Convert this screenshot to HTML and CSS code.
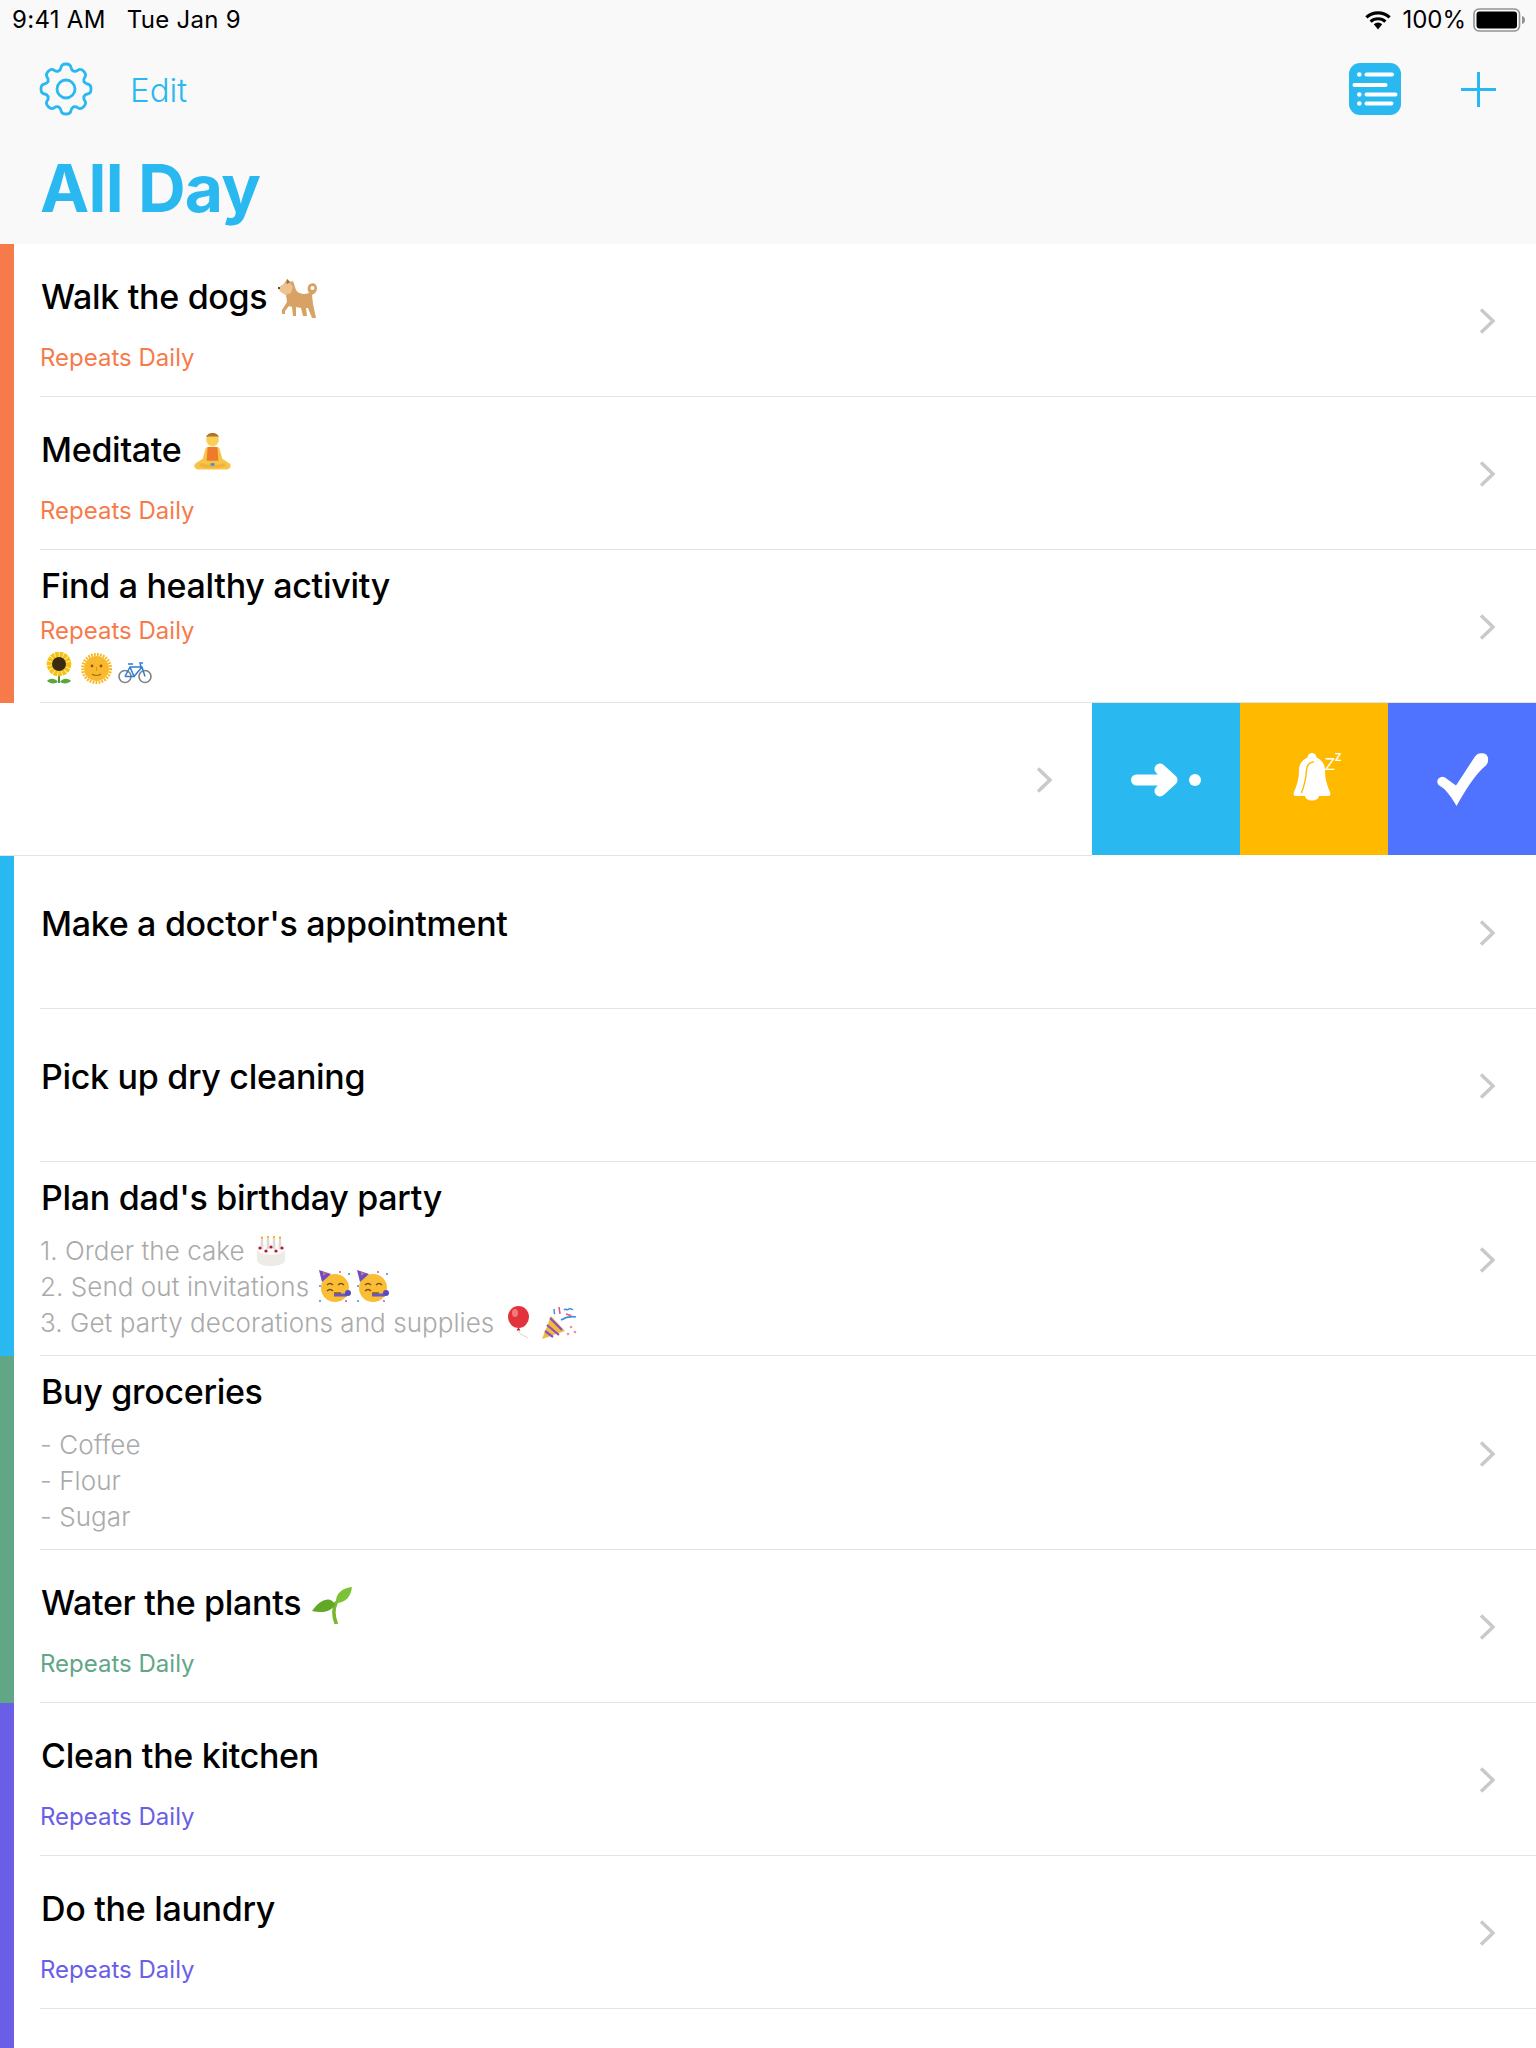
FILE: index.html
```html
<!DOCTYPE html>
<html lang="en">
<head>
<meta charset="utf-8">
<title>All Day</title>
<link rel="stylesheet" href="styles.css">
</head>
<body>
<svg class="defs" width="0" height="0" aria-hidden="true">
  <defs>
    <symbol id="chev" viewBox="0 0 16 26"><path d="M2 1.5 14 13 2 24.5" fill="none" stroke="#c9c9cc" stroke-width="3.4"/></symbol>
    <path id="gear-seg" d="M-7.46-18C-5.8-18.7-5.3-19.6-5-21.5C-4.7-23.7-3-25 0-25C3-25 4.7-23.7 5-21.5C5.3-19.6 5.800-18.7 7.46-18"/>
    <symbol id="dog" viewBox="0 0 40 41">
      <path d="M0 10 6 6 9 1 12 4 15 3 17 9C18 14 22 16 27 16L31 15C29 12 29 8 32 6 35 4 39 6 39 10 39 14 36 16 34 17L35 26 38 40H34L30 30H28L29 38H25L23 30 18 29V38H15L14 29 11 28 7 33V36H4V32L9 24 8 17 3 14Z" fill="#d8a265"/>
      <path d="M0 10 6 6 12 5 15 9 13 15 8 17 3 14Z" fill="#ecc290"/>
      <path d="M9 1 12 4 9 6Z" fill="#a8683a"/>
      <circle cx="34.500" cy="10" r="2" fill="#fff"/>
      <circle cx="1" cy="10" r="1" fill="#3a2412"/>
    </symbol>
    <symbol id="meditate" viewBox="0 0 40 39">
      <path d="M2 32 10 27 13 16c1-2 13-2 14 0l3 11 8 5c2 3-1 6-4 6H6c-3 0-6-3-4-6Z" fill="#f7c448"/>
      <circle cx="20" cy="7.500" r="6.500" fill="#f9cf55"/>
      <path d="M13.500 5c1-6 12-6 13 0l-2-1h-9Z" fill="#b0732c"/>
      <path d="M15 15h10l1 14H14Z" fill="#ef7a2c"/>
      <path d="M8 31c5 3 19 3 24 0l2 3c-6 3-22 3-28 0Z" fill="#eeb43a"/>
      <rect x="18" y="31.500" width="4" height="2.500" fill="#3d8ed8"/>
    </symbol>
    <symbol id="sunflower" viewBox="0 0 28 32">
      <path d="M14 22v9" stroke="#4e9a35" stroke-width="2"/>
      <path d="M13 30c-3-4-8-4-11-1 3 3 8 3 11 1ZM15 30c3-4 8-4 11-1-3 3-8 3-11 1Z" fill="#5aa83c"/>
      <circle cx="14" cy="12" r="9.300" fill="none" stroke="#f7c20e" stroke-width="6" stroke-dasharray="3.400 .6"/>
      <circle cx="14" cy="12" r="7" fill="#3a2a10"/>
    </symbol>
    <symbol id="sunface" viewBox="0 0 31 31">
      <circle cx="15.500" cy="15.500" r="14" fill="none" stroke="#f8b81c" stroke-width="3" stroke-dasharray="1.800 1.200"/>
      <circle cx="15.500" cy="15.500" r="12.500" fill="#f9b92e"/>
      <circle cx="11" cy="13" r="1.400" fill="#8a5a12"/><circle cx="20" cy="13" r="1.400" fill="#8a5a12"/>
      <path d="M11 21c2.500 2 6.500 2 9 0" fill="none" stroke="#a76e14" stroke-width="1.200"/>
      <path d="M15.500 14v4" stroke="#dc9418" stroke-width="1.200"/>
    </symbol>
    <symbol id="bike" viewBox="0 0 34 23">
      <circle cx="7" cy="15.500" r="6" fill="none" stroke="#7e8388" stroke-width="1.600"/>
      <circle cx="27" cy="15.500" r="6" fill="none" stroke="#7e8388" stroke-width="1.600"/>
      <path d="M7 15.500 12 6h12l3 9.500M12 6l4 9.500H7M24 6 16 15.500M23 6l-1-4h3M10 3h5" fill="none" stroke="#2d7fd0" stroke-width="1.500"/>
    </symbol>
    <symbol id="cake" viewBox="0 0 30 30">
      <path d="M1 13v11c0 8 28 8 28 0V13Z" fill="#ecebe6"/>
      <ellipse cx="15" cy="13" rx="14" ry="6" fill="#fbfaf6"/>
      <path d="M6 4v9M12 2v11M18 2v11M24 4v9" stroke="#ddd8d0" stroke-width="2.400"/>
      <path d="M6 .5v3M12 0v2M18 0v2M24 .5v3" stroke="#f2b632" stroke-width="2"/>
      <g fill="#b8143c"><circle cx="4" cy="12" r="1.600"/><circle cx="10" cy="15" r="1.600"/><circle cx="20" cy="15" r="1.600"/><circle cx="26" cy="12" r="1.600"/><circle cx="15" cy="11" r="1.600"/></g>
    </symbol>
    <symbol id="party" viewBox="0 0 33 33">
      <circle cx="17" cy="18" r="14" fill="#f9bd36"/>
      <path d="M1 0 13 4 4 12Z" fill="#6b4fc4"/><path d="M5 2 9 3 5 6Z" fill="#ee6a6a"/>
      <path d="M9 15c2-2 4-2 6 0M20 15c2-2 4-2 6 0M9 21c2-2 4-2 6 0" fill="none" stroke="#7a4a12" stroke-width="1.300"/>
      <path d="M16 25h13" stroke="#6a58c8" stroke-width="3"/><circle cx="30" cy="23" r="3" fill="#5a4cb8"/>
      <path d="M16 23h7" stroke="#7a4a12" stroke-width="1.300"/>
      <g fill="#3d8ed8"><circle cx="2" cy="31" r="1"/><circle cx="31" cy="4" r="1"/><circle cx="2" cy="16" r="1"/></g>
      <g fill="#e2527a"><circle cx="22" cy="2" r="1"/><circle cx="28" cy="31" r="1"/></g>
    </symbol>
    <symbol id="balloon" viewBox="0 0 26 33">
      <ellipse cx="11.500" cy="11" rx="10.500" ry="11" fill="#e2323c"/>
      <ellipse cx="8" cy="7" rx="3" ry="4" fill="#f27a7a"/>
      <path d="M11 22l-1.500 2.500h4L12 22Z" fill="#c8242e"/>
      <path d="M12 25c0 4 5 4 9 7" fill="none" stroke="#c9c9c9" stroke-width=".8"/>
    </symbol>
    <symbol id="popper" viewBox="0 0 35 33">
      <path d="M0 33 9 10 23 25Z" fill="#f0bb3a"/>
      <path d="M5 19 17 29M3 25 11 31M8 12 20 24" stroke="#8a4fc4" stroke-width="2.200"/>
      <path d="M12 3c1 2-1 3 1 5M22 4c2-2 3 1 5-1s2 2 4 0M19 14c5-3 10-4 15-3" fill="none" stroke="#3d8ed8" stroke-width="1.500"/>
      <path d="M17 1l1 7M24 8c2 0 3 2 5 1" fill="none" stroke="#e2527a" stroke-width="1.500"/>
      <g fill="#e88fb0"><circle cx="29" cy="21" r="1.300"/><circle cx="33" cy="26" r="1.300"/><circle cx="26" cy="28" r="1.300"/></g>
    </symbol>
    <symbol id="seedling" viewBox="0 0 40 37">
      <path d="M24 36c-3-8-3-14 0-20" fill="none" stroke="#79b82e" stroke-width="3.600" stroke-linecap="round"/>
      <path d="M23 18C20 10 10 10 0 24c8 2 18 2 23-6Z" fill="#5fa828"/>
      <path d="M24 16C23 6 31 1 40 0c-1 9-6 16-16 16Z" fill="#7cc238"/>
    </symbol>
  </defs>
</svg>

<div class="page">
  <header class="header">
    <div class="status">
      <div class="status-left"><span>9:41 AM</span><span>Tue Jan 9</span></div>
      <div class="status-right">
        <svg class="wifi" viewBox="0 0 28 20"><path d="M2.400 7.400a17 17 0 0 1 23.200 0M6.600 11.600a11 11 0 0 1 14.800 0" fill="none" stroke="#000" stroke-width="3.200"/><path d="M9.800 14.200a6 6 0 0 1 8.400 0L14 19.500Z"/></svg>
        <span class="pct">100%</span>
        <svg class="battery" viewBox="0 0 53 24"><rect x="1" y="1" width="45.500" height="22" rx="5" fill="none" stroke="#929292" stroke-width="1.600"/><rect x="3.500" y="3.500" width="40.500" height="17" rx="3" fill="#000"/><path d="M49 8c2 .5 3 2 3 4s-1 3.500-3 4Z" fill="#929292"/></svg>
      </div>
    </div>
    <nav class="toolbar">
      <div class="toolbar-left">
        <svg class="gear" viewBox="-28 -28 56 56" fill="none" stroke="#29b9f0" stroke-width="2.800" stroke-linecap="round">
          <use href="#gear-seg"/><use href="#gear-seg" transform="rotate(45)"/><use href="#gear-seg" transform="rotate(90)"/><use href="#gear-seg" transform="rotate(135)"/><use href="#gear-seg" transform="rotate(180)"/><use href="#gear-seg" transform="rotate(225)"/><use href="#gear-seg" transform="rotate(270)"/><use href="#gear-seg" transform="rotate(315)"/>
          <circle r="9"/>
        </svg>
        <span class="edit">Edit</span>
      </div>
      <div class="toolbar-right">
        <svg class="list-icon" viewBox="0 0 52 52">
          <rect width="52" height="52" rx="11" fill="#29b9f0"/>
          <g fill="none" stroke="#fff" stroke-width="4" stroke-linecap="round"><path d="M17.500 11.500H43M5.500 22H36.500M17.500 31.500H46.500M17.500 40.500H42.500"/></g>
          <g fill="#fff"><circle cx="10.300" cy="11.500" r="2.300"/><circle cx="10.300" cy="31.500" r="2.300"/><circle cx="10.300" cy="40.500" r="2.300"/></g>
        </svg>
        <svg class="plus" viewBox="0 0 35 35"><path d="M17.500 0V35M0 17.500H35" stroke="#29b9f0" stroke-width="3"/></svg>
      </div>
    </nav>
    <h1 class="page-title">All Day</h1>
  </header>

  <section class="group orange">
    <article class="row">
      <div class="text pad-wide">
        <div class="title">Walk the dogs<svg class="emoji e-dog"><use href="#dog"/></svg></div>
        <div class="sub gap-wide">Repeats Daily</div>
      </div>
      <svg class="chev"><use href="#chev"/></svg>
    </article>
    <article class="row">
      <div class="text pad-wide">
        <div class="title">Meditate<svg class="emoji e-med"><use href="#meditate"/></svg></div>
        <div class="sub gap-wide">Repeats Daily</div>
      </div>
      <svg class="chev"><use href="#chev"/></svg>
    </article>
    <article class="row">
      <div class="text pad-tight">
        <div class="title">Find a healthy activity</div>
        <div class="sub gap-tight">Repeats Daily</div>
        <div class="emoji-line"><svg class="e-sunflower"><use href="#sunflower"/></svg><svg class="e-sun"><use href="#sunface"/></svg><svg class="e-bike"><use href="#bike"/></svg></div>
      </div>
      <svg class="chev"><use href="#chev"/></svg>
    </article>
  </section>

  <section class="swiped">
    <div class="swiped-body"><svg class="chev"><use href="#chev"/></svg></div>
    <div class="action a-move">
      <svg class="i-move" viewBox="0 0 80 40"><path d="M10.500 20H46M34 9 46 20 34 31" fill="none" stroke="#fff" stroke-width="11" stroke-linecap="round" stroke-linejoin="round"/><circle cx="69" cy="20" r="6" fill="#fff"/></svg>
    </div>
    <div class="action a-snooze">
      <svg class="i-bell" viewBox="0 -6 56 62">
        <path d="M19 0a4.500 4.500 0 0 1 4.500 4.500C29 7 32 11.500 32 17c0 9 2 15 5 22 1 3 0 4-2 4H26c-1 6-13 6-14 0H3c-2 0-3-1-2-4 3-7 5-13 5-22 0-5.500 3-10 8.500-12.500A4.500 4.500 0 0 1 19 0Z" fill="#fff"/>
        <path d="M21 9c-4 0-7 3-7.500 8-.5 9-2 15-5 23" fill="none" stroke="#ffba00" stroke-width="1.400"/>
        <text class="zz" x="31" y="17">z</text><text class="zz-small" x="41.500" y="7.500">z</text>
      </svg>
    </div>
    <div class="action a-done">
      <svg class="i-check" viewBox="0 0 52 53"><path d="M1.500 32C-.5 29 0 26 3 24.500C5.500 23 7.500 24 10 26L19 32.500C24 25 31 14 38 3.500C40 .5 43-.5 47 .5C51 1.500 52 6 50.500 10C49.500 12.500 47 14 45 16C36 25 28 38 19.500 53C15 45 10 38 6 35Z" fill="#fff"/></svg>
    </div>
  </section>

  <section class="group blue">
    <article class="row">
      <div class="text pad-solo"><div class="title">Make a doctor's appointment</div></div>
      <svg class="chev"><use href="#chev"/></svg>
    </article>
    <article class="row">
      <div class="text pad-solo"><div class="title">Pick up dry cleaning</div></div>
      <svg class="chev"><use href="#chev"/></svg>
    </article>
    <article class="row row-tall">
      <div class="text pad-tight">
        <div class="title">Plan dad's birthday party</div>
        <div class="notes">
          <div class="note">1. Order the cake<svg class="emoji e-cake"><use href="#cake"/></svg></div>
          <div class="note">2. Send out invitations<svg class="emoji e-party"><use href="#party"/></svg><svg class="emoji e-party2"><use href="#party"/></svg></div>
          <div class="note">3. Get party decorations and supplies<svg class="emoji e-balloon"><use href="#balloon"/></svg><svg class="emoji e-popper"><use href="#popper"/></svg></div>
        </div>
      </div>
      <svg class="chev"><use href="#chev"/></svg>
    </article>
  </section>

  <section class="group green">
    <article class="row row-tall">
      <div class="text pad-tight">
        <div class="title">Buy groceries</div>
        <div class="notes">
          <div class="note">- Coffee</div>
          <div class="note">- Flour</div>
          <div class="note">- Sugar</div>
        </div>
      </div>
      <svg class="chev"><use href="#chev"/></svg>
    </article>
    <article class="row">
      <div class="text pad-wide">
        <div class="title">Water the plants<svg class="emoji e-seed"><use href="#seedling"/></svg></div>
        <div class="sub gap-wide">Repeats Daily</div>
      </div>
      <svg class="chev"><use href="#chev"/></svg>
    </article>
  </section>

  <section class="group purple fill">
    <article class="row">
      <div class="text pad-wide">
        <div class="title">Clean the kitchen</div>
        <div class="sub gap-wide">Repeats Daily</div>
      </div>
      <svg class="chev"><use href="#chev"/></svg>
    </article>
    <article class="row">
      <div class="text pad-wide">
        <div class="title">Do the laundry</div>
        <div class="sub gap-wide">Repeats Daily</div>
      </div>
      <svg class="chev"><use href="#chev"/></svg>
    </article>
  </section>
</div>
</body>
</html>
```

FILE: styles.css
```css
* { box-sizing: border-box; }
html, body { margin: 0; padding: 0; background: #fff; }
body { font-family: Inter, "Liberation Sans", sans-serif; color: #000; }
.defs { display: block; height: 0; }
.page { height: 2048px; display: flex; flex-direction: column; overflow: hidden; }

.header { height: 244px; background: #f9f9f9; flex: none; }
.status { height: 39px; display: flex; justify-content: space-between; align-items: center; padding: 0 10px 0 12px; font-size: 24px; letter-spacing: 0.3px; }
.status-left { display: flex; gap: 21px; }
.status-right { display: flex; align-items: center; }
.wifi { width: 28px; height: 20px; margin-right: 10px; }
.pct { margin-right: 7px; letter-spacing: 0; }
.battery { width: 53px; height: 24px; }

.toolbar { height: 58px; margin-top: 21px; padding: 0 40px 0 38px; display: flex; justify-content: space-between; align-items: center; }
.toolbar-left, .toolbar-right { display: flex; align-items: center; }
.gear { width: 56px; height: 56px; }
.edit { color: #29b9f0; font-size: 33px; font-weight: 300; margin-left: 36px; margin-top: 2px; }
.list-icon { width: 52px; height: 52px; }
.plus { width: 35px; height: 35px; margin-left: 60px; }
.page-title { margin: 30px 0 0; padding-left: 40px; color: #29b9f0; font-size: 66px; font-weight: 700; line-height: 80px; letter-spacing: -0.7px; }

.group { border-left: 14px solid; flex: none; }
.fill { flex: 1; }
.orange { border-color: #f77b4a; }
.blue { border-color: #29b9f0; }
.green { border-color: #62a688; }
.purple { border-color: #6a5ee6; }
.orange .sub { color: #f77b4a; }
.green .sub { color: #62a688; }
.purple .sub { color: #6a5ee6; }

.row { height: 153px; margin-left: 26px; padding-right: 41px; border-bottom: 1px solid #e3e3e3; display: flex; justify-content: space-between; align-items: center; }
.row-tall { height: 194px; }
.text { align-self: flex-start; }
.pad-wide { padding-top: 33px; }
.pad-tight { padding-top: 16px; }
.pad-solo { padding-top: 48px; }

.title { height: 40px; line-height: 40px; font-size: 34px; font-weight: 500; white-space: nowrap; letter-spacing: -0.3px; margin-left: 1px; }
.sub { height: 30px; line-height: 30px; font-size: 24px; }
.gap-wide { margin-top: 26px; }
.gap-tight { margin-top: 10px; }
.notes { margin-top: 15px; }
.note { height: 36px; line-height: 36px; font-size: 26px; font-weight: 300; color: #aaa; white-space: nowrap; letter-spacing: 0.06px; }

.emoji { display: inline-block; vertical-align: baseline; }
.e-dog { width: 40px; height: 41px; margin-left: 11px; vertical-align: -10px; }
.e-med { width: 39px; height: 39px; margin-left: 12px; vertical-align: -9px; }
.e-seed { width: 40px; height: 37px; margin-left: 11px; vertical-align: -9px; }
.emoji-line { display: flex; align-items: flex-end; margin-top: 5px; height: 33px; }
.e-sunflower { width: 28px; height: 32px; margin-left: 5px; }
.e-sun { width: 31px; height: 31px; margin-left: 8px; }
.e-bike { width: 34px; height: 23px; margin-left: 6px; }
.e-cake { width: 30px; height: 30px; margin-left: 11px; vertical-align: -6px; }
.e-party { width: 33px; height: 33px; margin-left: 9px; vertical-align: -7px; }
.e-party2 { width: 33px; height: 33px; margin-left: 5px; vertical-align: -7px; }
.e-balloon { width: 26px; height: 33px; margin-left: 13px; vertical-align: -7px; }
.e-popper { width: 35px; height: 33px; margin-left: 9px; vertical-align: -7px; }

.chev { width: 16px; height: 26px; flex: none; margin-top: 2px; }
.swiped { height: 153px; display: flex; flex: none; }
.swiped-body { flex: 1; border-bottom: 1px solid #e3e3e3; display: flex; align-items: center; justify-content: flex-end; padding-right: 40px; }
.action { width: 148px; height: 152px; display: flex; align-items: center; justify-content: center; }
.a-move { background: #29b9f0; }
.a-snooze { background: #ffba00; }
.a-done { background: #4f72ff; }
.i-move { width: 80px; height: 40px; margin-top: 1px; }
.i-bell { width: 56px; height: 62px; margin-left: 14px; margin-bottom: 3px; }
.i-check { width: 52px; height: 53px; margin-left: 2px; margin-top: 1px; }
.zz { fill: #fff; font-size: 22px; font-family: Inter, sans-serif; font-weight: 300; }
.zz-small { fill: #fff; font-size: 13px; font-family: Inter, sans-serif; font-weight: 500; }
```
